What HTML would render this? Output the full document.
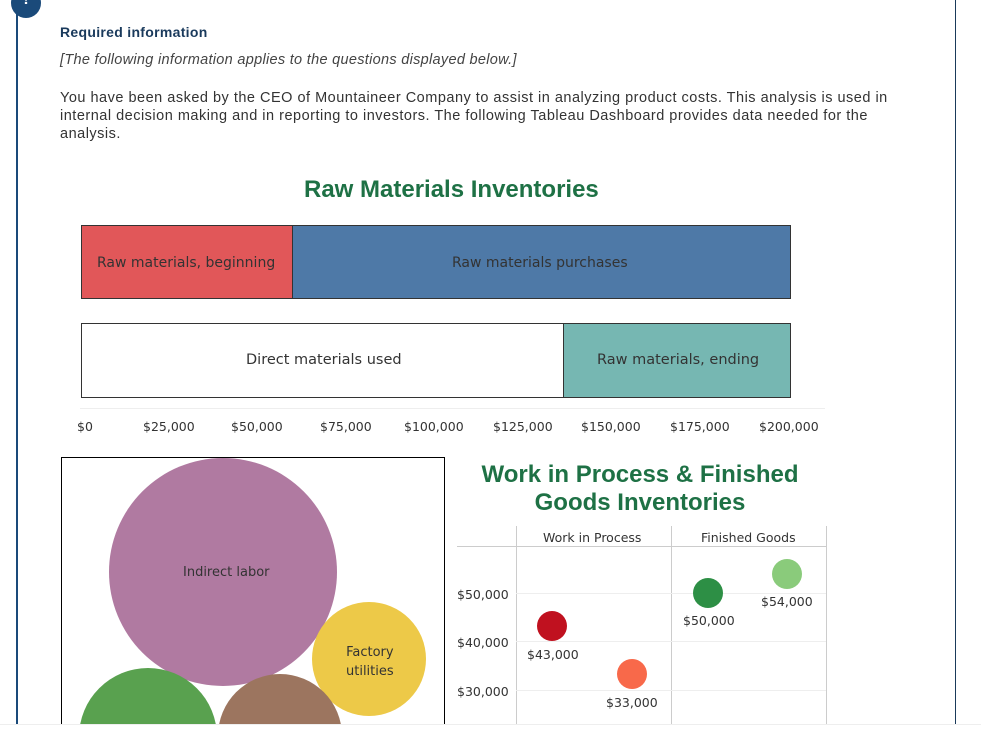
<!DOCTYPE html>
<html><head><style>
body{margin:0;width:981px;height:744px;overflow:hidden;background:#fff;font-family:"Liberation Sans",sans-serif;position:relative}
.a{position:absolute}
.lbl{font-family:"DejaVu Sans","Liberation Sans",sans-serif;font-size:14px;color:#333}
.ax{font-family:"DejaVu Sans",sans-serif;font-size:12.5px;color:#333}
</style></head><body>
<div class="a" style="left:16px;top:0;width:2px;height:724px;background:#1a4a7a"></div>
<div class="a" style="left:955px;top:0;width:1px;height:724px;background:#1a3a5a"></div>
<div class="a" style="left:11px;top:-12px;width:30px;height:30px;border-radius:50%;background:#1a4a7a;color:#fff;font-weight:bold;text-align:center;font-size:16px;line-height:24px">!</div>
<div class="a" style="left:60px;top:24px;font-size:14px;font-weight:bold;color:#1a3a5c;letter-spacing:0.3px">Required information</div>
<div class="a" style="left:60px;top:52px;font-size:14.5px;font-style:italic;color:#444;letter-spacing:0.3px;white-space:nowrap">[The following information applies to the questions displayed below.]</div>
<div class="a" style="left:60px;top:89px;font-size:14.5px;line-height:18px;color:#333;letter-spacing:0.5px;white-space:nowrap">You have been asked by the CEO of Mountaineer Company to assist in analyzing product costs. This analysis is used in<br>internal decision making and in reporting to investors. The following Tableau Dashboard provides data needed for the<br>analysis.</div>
<div class="a" style="left:304px;top:176px;font-size:24px;font-weight:bold;color:#1e7145">Raw Materials Inventories</div>
<div class="a" style="left:81px;top:225px;width:212px;height:74px;background:#e15759;border:1px solid #333;box-sizing:border-box"></div>
<div class="a lbl" style="left:97px;top:255px">Raw materials, beginning</div>
<div class="a" style="left:292px;top:225px;width:499px;height:74px;background:#4e79a7;border:1px solid #333;box-sizing:border-box"></div>
<div class="a lbl" style="left:452px;top:255px">Raw materials purchases</div>
<div class="a" style="left:81px;top:323px;width:483px;height:75px;background:#fff;border:1px solid #333;box-sizing:border-box"></div>
<div class="a lbl" style="left:246px;top:352px;font-size:14.5px">Direct materials used</div>
<div class="a" style="left:563px;top:323px;width:228px;height:75px;background:#76b7b2;border:1px solid #333;box-sizing:border-box"></div>
<div class="a lbl" style="left:597px;top:352px;font-size:14.5px">Raw materials, ending</div>
<div class="a" style="left:80px;top:408px;width:745px;height:1px;background:#eee"></div>
<div class="a ax" style="left:77px;top:419px">$0</div>
<div class="a ax" style="left:143px;top:419px">$25,000</div>
<div class="a ax" style="left:231px;top:419px">$50,000</div>
<div class="a ax" style="left:320px;top:419px">$75,000</div>
<div class="a ax" style="left:404px;top:419px">$100,000</div>
<div class="a ax" style="left:493px;top:419px">$125,000</div>
<div class="a ax" style="left:581px;top:419px">$150,000</div>
<div class="a ax" style="left:670px;top:419px">$175,000</div>
<div class="a ax" style="left:759px;top:419px">$200,000</div>
<div class="a" style="left:61px;top:457px;width:382px;height:267px;border:1px solid #000;border-bottom:none;overflow:hidden">
 <div class="a" style="left:47px;top:0;width:228px;height:228px;border-radius:50%;background:#b07aa1"></div>
 <div class="a lbl" style="left:121px;top:107px;font-size:13px">Indirect labor</div>
 <div class="a" style="left:250px;top:144px;width:114px;height:114px;border-radius:50%;background:#edc948"></div>
 <div class="a lbl" style="left:284px;top:185px;text-align:center;line-height:19px;font-size:13px">Factory<br>utilities</div>
 <div class="a" style="left:17px;top:210px;width:138px;height:138px;border-radius:50%;background:#59a14f"></div>
 <div class="a" style="left:156px;top:216px;width:124px;height:124px;border-radius:50%;background:#9c755f"></div>
</div>
<div class="a" style="left:470px;top:461px;width:340px;text-align:center;font-size:24px;font-weight:bold;color:#1e7145;line-height:28px">Work in Process &amp; Finished<br>Goods Inventories</div>
<div class="a" style="left:516px;top:526px;width:1px;height:198px;background:#ccc"></div>
<div class="a" style="left:671px;top:526px;width:1px;height:198px;background:#ccc"></div>
<div class="a" style="left:826px;top:526px;width:1px;height:198px;background:#ccc"></div>
<div class="a" style="left:457px;top:546px;width:369px;height:1px;background:#ccc"></div>
<div class="a" style="left:516px;top:593px;width:310px;height:1px;background:#eee"></div>
<div class="a" style="left:516px;top:641px;width:310px;height:1px;background:#eee"></div>
<div class="a" style="left:516px;top:690px;width:310px;height:1px;background:#eee"></div>
<div class="a ax" style="left:543px;top:530px">Work in Process</div>
<div class="a ax" style="left:701px;top:530px">Finished Goods</div>
<div class="a ax" style="left:457px;top:587px">$50,000</div>
<div class="a ax" style="left:457px;top:635px">$40,000</div>
<div class="a ax" style="left:457px;top:684px">$30,000</div>
<div class="a" style="left:537px;top:611px;width:30px;height:30px;border-radius:50%;background:#c0111f"></div>
<div class="a ax" style="left:527px;top:647px">$43,000</div>
<div class="a" style="left:617px;top:659px;width:30px;height:30px;border-radius:50%;background:#f8694a"></div>
<div class="a ax" style="left:606px;top:695px">$33,000</div>
<div class="a" style="left:693px;top:578px;width:30px;height:30px;border-radius:50%;background:#2d8f45"></div>
<div class="a ax" style="left:683px;top:613px">$50,000</div>
<div class="a" style="left:772px;top:559px;width:30px;height:30px;border-radius:50%;background:#8acb7b"></div>
<div class="a ax" style="left:761px;top:594px">$54,000</div>
<div class="a" style="left:0;top:724px;width:981px;height:19px;background:#fff;border-top:1px solid #eee"></div>
</body></html>
